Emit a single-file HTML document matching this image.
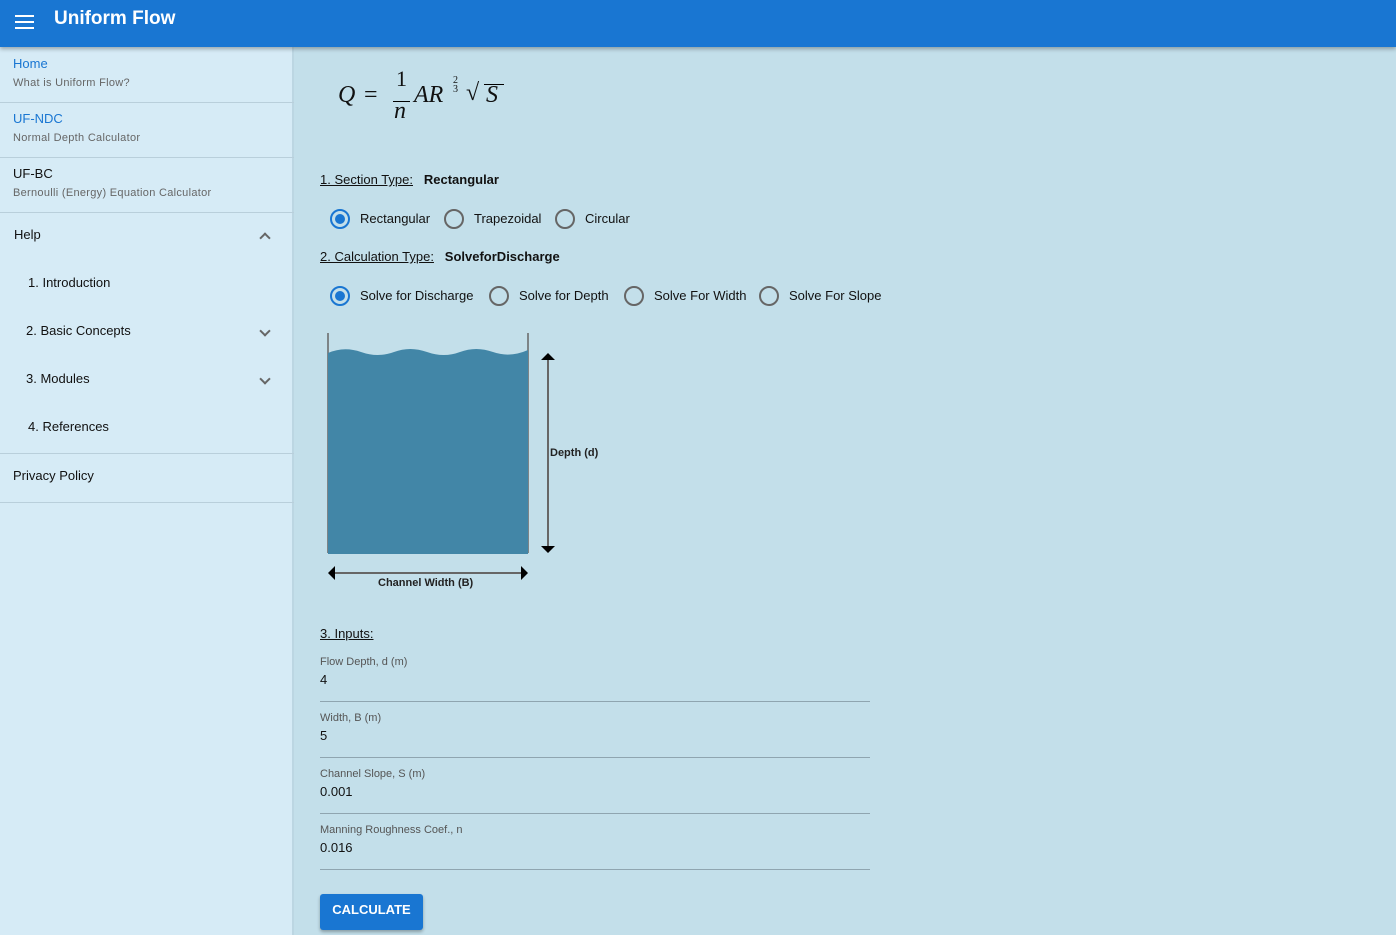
<!DOCTYPE html>
<html><head><meta charset="utf-8"><style>
*{margin:0;padding:0;box-sizing:border-box}
body{width:1396px;height:935px;overflow:hidden;background:#c3dfea;font-family:"Liberation Sans",sans-serif;color:#111;position:relative}
.a{position:absolute;white-space:nowrap}
#hdr{position:absolute;left:0;top:0;width:1396px;height:47px;background:#1976d2;box-shadow:0 2px 4px rgba(0,0,0,.3);z-index:2}
#side{position:absolute;left:0;top:47px;width:294px;height:888px;background:#d6ebf6;border-right:2px solid #bcd6e2}
.hr{position:absolute;left:0;width:294px;height:1px;background:#b9cfdb}
.t1{font-size:13px}
.t2{font-size:11px;color:#666;letter-spacing:.3px}
.chev{position:absolute;width:8px;height:8px;border-left:2px solid #666;border-top:2px solid #666}
.rad{position:absolute;width:20px;height:20px;border:2px solid #666;border-radius:50%}
.rad.on{border-color:#1976d2}
.rad.on::after{content:"";position:absolute;left:3px;top:3px;width:10px;height:10px;border-radius:50%;background:#1976d2}
.lab{font-size:11px;color:#555}
.val{font-size:13px}
.line{position:absolute;left:320px;width:550px;height:1px;background:#8fa5b0}
</style></head><body>
<div id="hdr">
<div class="a" style="left:15px;top:15px;width:19px;height:2px;background:#fff"></div>
<div class="a" style="left:15px;top:21px;width:19px;height:2px;background:#fff"></div>
<div class="a" style="left:15px;top:27px;width:19px;height:2px;background:#fff"></div>
<div class="a" style="left:54px;top:8px;color:#fff;font-size:19px;font-weight:bold">Uniform Flow</div>
</div>
<div id="side">
<div class="a t1" style="left:13px;top:9px;color:#1976d2">Home</div>
<div class="a t2" style="left:13px;top:30px">What is Uniform Flow?</div>
<div class="hr" style="top:55px"></div>
<div class="a t1" style="left:13px;top:64px;color:#1976d2">UF-NDC</div>
<div class="a t2" style="left:13px;top:85px">Normal Depth Calculator</div>
<div class="hr" style="top:110px"></div>
<div class="a t1" style="left:13px;top:119px">UF-BC</div>
<div class="a t2" style="left:13px;top:140px">Bernoulli (Energy) Equation Calculator</div>
<div class="hr" style="top:165px"></div>
<div class="a t1" style="left:14px;top:180px">Help</div>
<div class="chev" style="left:261px;top:187px;transform:rotate(45deg)"></div>
<div class="a t1" style="left:28px;top:228px">1. Introduction</div>
<div class="a t1" style="left:26px;top:276px">2. Basic Concepts</div>
<div class="chev" style="left:261px;top:280px;transform:rotate(225deg)"></div>
<div class="a t1" style="left:26px;top:324px">3. Modules</div>
<div class="chev" style="left:261px;top:328px;transform:rotate(225deg)"></div>
<div class="a t1" style="left:28px;top:372px">4. References</div>
<div class="hr" style="top:406px"></div>
<div class="a t1" style="left:13px;top:421px">Privacy Policy</div>
<div class="hr" style="top:455px"></div>
</div>

<div class="a" style="left:338px;top:82px;font-family:'Liberation Serif',serif;font-style:italic;font-size:24px">Q</div>
<div class="a" style="left:364px;top:82px;font-family:'Liberation Serif',serif;font-size:24px">=</div>
<div class="a" style="left:396px;top:66px;font-family:'Liberation Serif',serif;font-size:22px">1</div>
<div class="a" style="left:393px;top:101px;width:17px;height:1px;background:#000"></div>
<div class="a" style="left:394px;top:98px;font-family:'Liberation Serif',serif;font-style:italic;font-size:24px">n</div>
<div class="a" style="left:414px;top:82px;font-family:'Liberation Serif',serif;font-style:italic;font-size:24px">AR</div>
<div class="a" style="left:453px;top:76px;font-family:'Liberation Serif',serif;font-size:10px;line-height:9px;text-align:center">2<br>3</div>
<div class="a" style="left:466px;top:80px;font-family:'Liberation Serif',serif;font-size:24px">√</div>
<div class="a" style="left:484px;top:84px;width:20px;height:1px;background:#000"></div>
<div class="a" style="left:486px;top:82px;font-family:'Liberation Serif',serif;font-style:italic;font-size:24px">S</div>

<div class="a t1" style="left:320px;top:172px"><u>1. Section Type:</u> &nbsp; <b>Rectangular</b></div>
<div class="rad on" style="left:330px;top:209px"></div><div class="a t1" style="left:360px;top:211px">Rectangular</div>
<div class="rad" style="left:444px;top:209px"></div><div class="a t1" style="left:474px;top:211px">Trapezoidal</div>
<div class="rad" style="left:555px;top:209px"></div><div class="a t1" style="left:585px;top:211px">Circular</div>
<div class="a t1" style="left:320px;top:249px"><u>2. Calculation Type:</u> &nbsp; <b>SolveforDischarge</b></div>
<div class="rad on" style="left:330px;top:286px"></div><div class="a t1" style="left:360px;top:288px">Solve for Discharge</div>
<div class="rad" style="left:489px;top:286px"></div><div class="a t1" style="left:519px;top:288px">Solve for Depth</div>
<div class="rad" style="left:624px;top:286px"></div><div class="a t1" style="left:654px;top:288px">Solve For Width</div>
<div class="rad" style="left:759px;top:286px"></div><div class="a t1" style="left:789px;top:288px">Solve For Slope</div>

<svg class="a" style="left:310px;top:320px" width="320" height="280">
<line x1="18" y1="13" x2="18" y2="233" stroke="#666" stroke-width="1.5"/>
<line x1="218" y1="13" x2="218" y2="233" stroke="#666" stroke-width="1.5"/>
<path d="M18 33 Q34 26 51 32 T84 32 T117 32 T150 32 T183 32 T218 30 L218 234 L18 234 Z" fill="#4286a7"/>
<line x1="238" y1="38" x2="238" y2="228" stroke="#666" stroke-width="2"/>
<path d="M231 40 L238 33 L245 40 Z M231 226 L238 233 L245 226 Z" fill="#000"/>
<line x1="22" y1="253" x2="214" y2="253" stroke="#666" stroke-width="2"/>
<path d="M25 246 L18 253 L25 260 Z M211 246 L218 253 L211 260 Z" fill="#000"/>
<text x="240" y="136" font-family="Liberation Sans" font-size="11" font-weight="bold" fill="#222">Depth (d)</text>
<text x="68" y="266" font-family="Liberation Sans" font-size="11" font-weight="bold" fill="#222">Channel Width (B)</text>
</svg>

<div class="a t1" style="left:320px;top:626px"><u>3. Inputs:</u></div>
<div class="a lab" style="left:320px;top:656px">Flow Depth, d (m)</div><div class="a val" style="left:320px;top:672px">4</div><div class="line" style="top:701px"></div>
<div class="a lab" style="left:320px;top:712px">Width, B (m)</div><div class="a val" style="left:320px;top:728px">5</div><div class="line" style="top:757px"></div>
<div class="a lab" style="left:320px;top:768px">Channel Slope, S (m)</div><div class="a val" style="left:320px;top:784px">0.001</div><div class="line" style="top:813px"></div>
<div class="a lab" style="left:320px;top:824px">Manning Roughness Coef., n</div><div class="a val" style="left:320px;top:840px">0.016</div><div class="line" style="top:869px"></div>
<div class="a" style="left:320px;top:894px;width:103px;height:36px;background:#1976d2;border-radius:3px;box-shadow:0 2px 3px rgba(0,0,0,.3);color:#fff;font-size:13px;font-weight:bold;text-align:center;line-height:32px">CALCULATE</div>
</body></html>
